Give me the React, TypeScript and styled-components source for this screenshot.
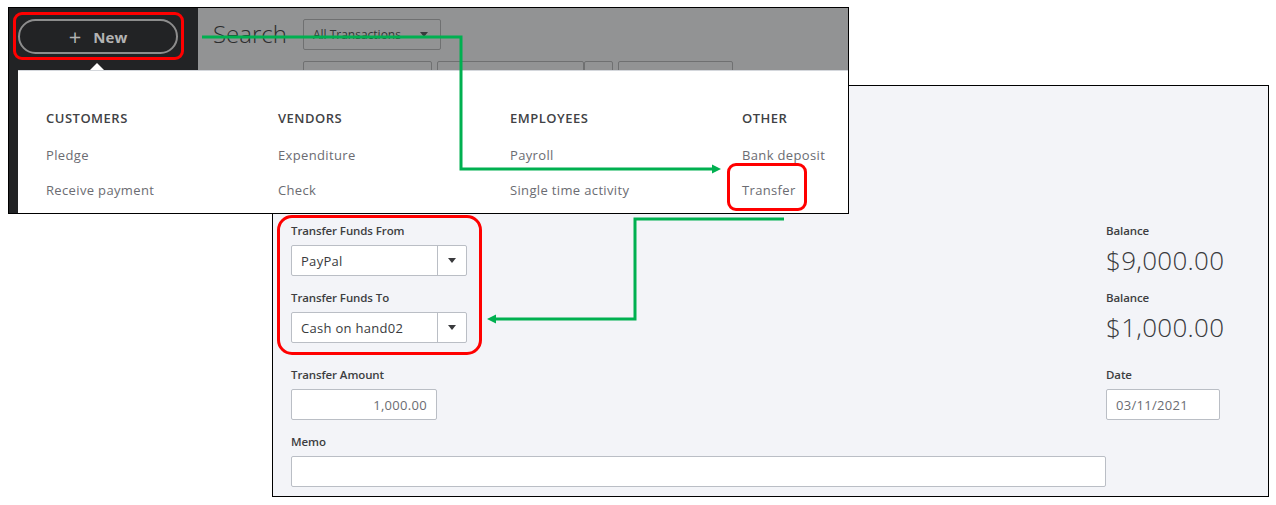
import React from 'react';
import styled, { createGlobalStyle } from 'styled-components';

const GlobalStyle = createGlobalStyle`
  html, body {
    margin: 0;
    padding: 0;
    background: #ffffff;
  }
  body {
    font-family: "Open Sans", "Liberation Sans", sans-serif;
  }
`;

const menu = [
  { title: 'CUSTOMERS', items: ['Pledge', 'Receive payment'] },
  { title: 'VENDORS', items: ['Expenditure', 'Check'] },
  { title: 'EMPLOYEES', items: ['Payroll', 'Single time activity'] },
  { title: 'OTHER', items: ['Bank deposit', 'Transfer'] },
];

const highlights = [
  { left: 13, top: 12, w: 171, h: 48, r: 9 },
  { left: 727, top: 163, w: 80, h: 48, r: 9 },
  { left: 277, top: 215, w: 205, h: 140, r: 15 },
];

const App = () => {
  return (
    <>
      <GlobalStyle />
      <Desktop>
        <Shot $left={272} $top={85} $w={997} $h={412} $z={1}>
          <TransferForm>
            <Field>
              <Label>Transfer Funds From</Label>
              <Select>
                <span>PayPal</span>
                <SelectToggle><Caret /></SelectToggle>
              </Select>
            </Field>
            <Field>
              <Label>Balance</Label>
              <Amount>$9,000.00</Amount>
            </Field>

            <Field>
              <Label>Transfer Funds To</Label>
              <Select>
                <span>Cash on hand02</span>
                <SelectToggle><Caret /></SelectToggle>
              </Select>
            </Field>
            <Field>
              <Label>Balance</Label>
              <Amount>$1,000.00</Amount>
            </Field>

            <Field $spaced>
              <Label>Transfer Amount</Label>
              <Input $width={146} $align="right">1,000.00</Input>
            </Field>
            <Field $spaced>
              <Label>Date</Label>
              <Input $width={114}>03/11/2021</Input>
            </Field>

            <Field>
              <Label>Memo</Label>
              <Input />
            </Field>
          </TransferForm>
        </Shot>

        <Shot $left={8} $top={7} $w={841} $h={207} $z={2} $dark>
          <Header>
            <SideBar>
              <NewButton>
                <Plus>+</Plus>
                <span>New</span>
              </NewButton>
            </SideBar>
            <SearchBar>
              <SearchTitle>Search</SearchTitle>
              <Filters>
                <FilterBox $width={138}>
                  <span>All Transactions</span>
                  <Caret />
                </FilterBox>
                <FilterRow>
                  <FilterBox $width={129} />
                  <FilterGroup>
                    <FilterBox $width={147} />
                    <FilterBox $width={29} />
                  </FilterGroup>
                  <FilterBox $width={115} />
                </FilterRow>
              </Filters>
            </SearchBar>
          </Header>
          <NewMenu>
            {menu.map((col) => (
              <MenuColumn key={col.title}>
                <MenuHeading>{col.title}</MenuHeading>
                {col.items.map((item) => (
                  <MenuItem key={item}>{item}</MenuItem>
                ))}
              </MenuColumn>
            ))}
          </NewMenu>
        </Shot>

        {highlights.map((h, i) => (
          <Highlight
            key={i}
            style={{ left: h.left, top: h.top, width: h.w, height: h.h, borderRadius: h.r }}
          />
        ))}

        <Arrows width="1276" height="505" viewBox="0 0 1276 505">
          <path d="M202 37 H461 V169 H714" />
          <polygon points="712,164.5 721,169 712,173.5" />
          <path d="M784 219 H635 V319 H494" />
          <polygon points="496,314.5 487,319 496,323.5" />
        </Arrows>
      </Desktop>
    </>
  );
};

export default App;

const Desktop = styled.div`
  position: relative;
  width: 1276px;
  height: 505px;
  overflow: hidden;
  background: #ffffff;
`;

const Shot = styled.div<{ $left: number; $top: number; $w: number; $h: number; $z: number; $dark?: boolean }>`
  position: absolute;
  left: ${(p) => p.$left}px;
  top: ${(p) => p.$top}px;
  width: ${(p) => p.$w}px;
  height: ${(p) => p.$h}px;
  z-index: ${(p) => p.$z};
  box-sizing: border-box;
  border: 1px solid #000000;
  background: ${(p) => (p.$dark ? '#222325' : '#f3f4f8')};
  display: flex;
  flex-direction: column;
  overflow: hidden;
`;

/* ---------- top screenshot: header + New menu ---------- */

const Header = styled.div`
  display: flex;
  height: 62px;
  flex-shrink: 0;
`;

const SideBar = styled.div`
  width: 189px;
  box-sizing: border-box;
  padding: 11px 0 0 9px;
`;

const NewButton = styled.div`
  width: 160px;
  height: 35px;
  box-sizing: border-box;
  border: 2px solid #8d8d8d;
  border-radius: 18px;
  display: flex;
  align-items: center;
  justify-content: center;
  gap: 12px;
  color: #b3b3b3;
  font-size: 15px;
  font-weight: 700;
`;

const Plus = styled.span`
  font-size: 22px;
  font-weight: 400;
  line-height: 1;
  margin-top: -2px;
`;

const SearchBar = styled.div`
  flex: 1;
  background: #929394;
  padding: 10px 0 0 15px;
  display: flex;
  align-items: flex-start;
  overflow: hidden;
`;

const SearchTitle = styled.div`
  font-size: 24px;
  font-weight: 300;
  line-height: 31px;
  color: #2c2d2e;
  margin-right: 16px;
`;

const Filters = styled.div`
  display: flex;
  flex-direction: column;
  gap: 11px;
  padding-top: 1px;
`;

const FilterRow = styled.div`
  display: flex;
  gap: 5px;
`;

const FilterGroup = styled.div`
  display: flex;
`;

const FilterBox = styled.div<{ $width: number }>`
  width: ${(p) => p.$width}px;
  height: 31px;
  box-sizing: border-box;
  border: 1px solid #6f7071;
  border-radius: 2px;
  display: flex;
  align-items: center;
  justify-content: space-between;
  padding: 0 12px 0 9px;
  font-size: 12px;
  color: #333435;
`;

const Caret = styled.span`
  display: inline-block;
  width: 0;
  height: 0;
  border-left: 4px solid transparent;
  border-right: 4px solid transparent;
  border-top: 5px solid #393a3d;
`;

const NewMenu = styled.div`
  position: relative;
  flex: 1;
  margin-left: 9px;
  background: #ffffff;
  border-top: 1px solid #d4d7dc;
  display: grid;
  grid-template-columns: repeat(4, 232px);
  padding: 38px 0 0 28px;

  &::before {
    content: '';
    position: absolute;
    top: -8px;
    left: 72px;
    border-left: 7px solid transparent;
    border-right: 7px solid transparent;
    border-bottom: 7px solid #ffffff;
  }
`;

const MenuColumn = styled.div`
  display: flex;
  flex-direction: column;
  gap: 17px;
`;

const MenuHeading = styled.div`
  font-size: 13px;
  font-weight: 600;
  line-height: 18px;
  letter-spacing: 0.5px;
  color: #414245;
  margin-bottom: 2px;
`;

const MenuItem = styled.div`
  font-size: 13px;
  line-height: 18px;
  letter-spacing: 0.35px;
  color: #6b6c72;
`;

/* ---------- bottom screenshot: transfer form ---------- */

const TransferForm = styled.div`
  display: grid;
  grid-template-columns: 815px 114px;
  row-gap: 14px;
  padding: 137px 0 0 18px;
`;

const Field = styled.div<{ $spaced?: boolean }>`
  display: flex;
  flex-direction: column;
  gap: 6px;
  margin-top: ${(p) => (p.$spaced ? '10px' : '0')};
`;

const Label = styled.div`
  font-size: 11.5px;
  font-weight: 600;
  line-height: 16px;
  letter-spacing: -0.1px;
  color: #3d3e41;
`;

const Amount = styled.div`
  font-size: 26px;
  font-weight: 300;
  line-height: 31px;
  letter-spacing: 0.3px;
  color: #393a3d;
  white-space: nowrap;
`;

const Select = styled.div`
  width: 176px;
  height: 31px;
  box-sizing: border-box;
  border: 1px solid #babec5;
  border-radius: 2px;
  background: #ffffff;
  display: flex;
  align-items: center;
  justify-content: space-between;
  padding-left: 9px;
  font-size: 13px;
  letter-spacing: 0.3px;
  color: #393a3d;
`;

const SelectToggle = styled.div`
  width: 28px;
  height: 100%;
  border-left: 1px solid #babec5;
  display: flex;
  align-items: center;
  justify-content: center;
`;

const Input = styled.div<{ $width?: number; $align?: 'left' | 'right' }>`
  width: ${(p) => (p.$width ? `${p.$width}px` : '100%')};
  height: 31px;
  box-sizing: border-box;
  border: 1px solid #babec5;
  border-radius: 2px;
  background: #ffffff;
  display: flex;
  align-items: center;
  justify-content: ${(p) => (p.$align === 'right' ? 'flex-end' : 'flex-start')};
  padding: 0 9px;
  font-size: 13px;
  letter-spacing: 0.3px;
  color: #6b6c72;
`;

/* ---------- annotations ---------- */

const Highlight = styled.div`
  position: absolute;
  z-index: 3;
  box-sizing: border-box;
  border: 3px solid #ff0000;
  pointer-events: none;
`;

const Arrows = styled.svg`
  position: absolute;
  left: 0;
  top: 0;
  z-index: 4;
  pointer-events: none;

  & path {
    fill: none;
    stroke: #00b050;
    stroke-width: 3;
  }
  & polygon {
    fill: #00b050;
  }
`;
